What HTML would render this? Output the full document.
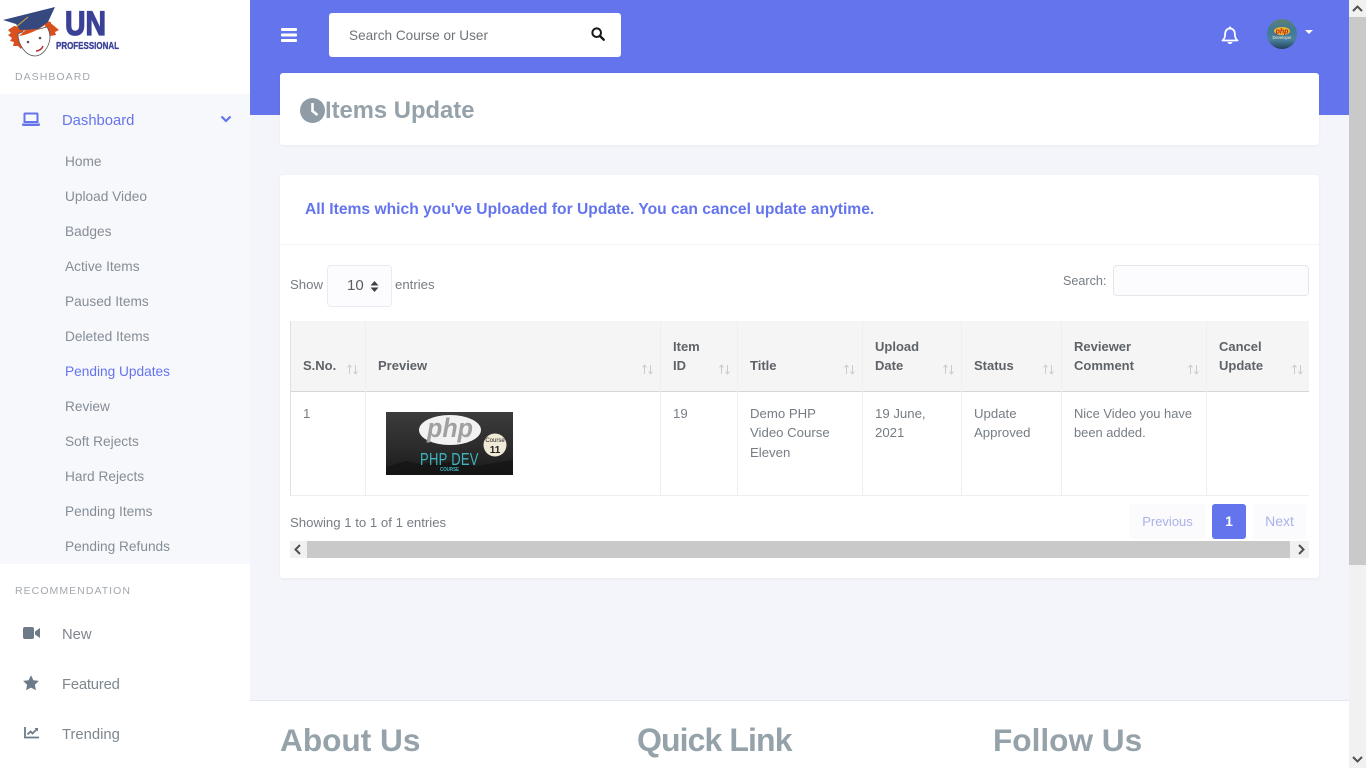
<!DOCTYPE html>
<html lang="en">
<head>
<meta charset="utf-8">
<title>Items Update</title>
<style>
*{box-sizing:border-box}
html,body{margin:0;padding:0;width:1366px;height:768px;overflow:hidden;background:#f4f5fa;font-family:"Liberation Sans",sans-serif;color:#6c757d;font-size:14px}
.a{position:absolute;white-space:nowrap}
.nav{font-size:13.7px;color:#858d96;left:65px;line-height:20px;margin-top:1px}
.hd{font-size:10.5px;letter-spacing:1.05px;color:#a3a8ae;left:15px;line-height:14px}
.main{font-size:14.8px;color:#7e868e;left:62px;line-height:20px}
.th{font-weight:bold;font-size:13px;color:#5e6368;line-height:19px}
.td{font-size:13.2px;color:#767d84;line-height:19.5px}
.v{position:absolute;width:1px;background:#eeeff1}
.s{position:absolute;top:364px;width:11px;height:11px}
.ft{font-weight:bold;font-size:32px;color:#95a2aa;line-height:40px;top:720px}
</style>
</head>
<body>
<div class="a" style="left:250px;top:0;width:1099px;height:115px;background:#6474ed"></div>
<div class="a" style="left:0;top:0;width:250px;height:768px;background:#fff"></div>
<div class="a" style="left:0;top:94px;width:250px;height:470px;background:#f7f8fb"></div>

<svg class="a" style="left:0;top:0" width="125" height="60" viewBox="0 0 125 60">
<path d="M14 26l-6 4 3 3-3 2 4 3-2 3 4 1-1 4 5 0 3 3 3-6-1-12 18-6 8-3 4 3 6 5-4 2 1 3-6 1-3 3-2-14-16 2z" fill="#d9501e"/>
<path d="M18 34c0 11 8 22 17 22 7 0 14-8 15-18 0-4-1-8-3-11l-20 5-5 0z" fill="#fff" stroke="#555" stroke-width=".8"/>
<path d="M19 36c8-1 17-5 26-11l5 5 1-8-14-2z" fill="#d9501e"/>
<path d="M3 20L55 7 48 22 38 29 20 30 16 24z" fill="#35497f"/>
<path d="M16 27l12-10" stroke="#d6b13a" stroke-width=".9" fill="none"/>
<circle cx="28" cy="42" r="1.300" fill="#555"/><circle cx="40" cy="38" r="1.300" fill="#555"/>
<path d="M36 51c3 0 6-2 7-5" stroke="#b33" stroke-width="1.600" fill="none"/>
<text x="65" y="35" font-family="Liberation Sans" font-weight="bold" font-size="34" fill="#3a4197" stroke="#3a4197" stroke-width="1.300" textLength="41" lengthAdjust="spacingAndGlyphs">UN</text>
<text x="56" y="49" font-family="Liberation Sans" font-weight="bold" font-size="10.500" fill="#3a4197" stroke="#3a4197" stroke-width=".35" textLength="63" lengthAdjust="spacingAndGlyphs">PROFESSIONAL</text>
</svg>

<div class="a hd" style="top:70px">DASHBOARD</div>
<svg class="a" style="left:22px;top:112px" width="18" height="15" viewBox="0 0 18 15"><path d="M3 1.500h12a.5.5 0 0 1 .5.5v8h-13V2a.5.5 0 0 1 .5-.5z" fill="none" stroke="#6474ed" stroke-width="2"/><path d="M0 11.500h18v1a1.500 1.500 0 0 1-1.500 1.500H1.500A1.500 1.500 0 0 1 0 12.500z" fill="#6474ed"/></svg>
<div class="a main" style="top:111px;color:#6474ed">Dashboard</div>
<svg class="a" style="left:220px;top:115px" width="12" height="9" viewBox="0 0 12 9"><path d="M1.500 1.500L6 6l4.500-4.500" fill="none" stroke="#6474ed" stroke-width="2.200"/></svg>
<div class="a nav" style="top:151px">Home</div>
<div class="a nav" style="top:186px">Upload Video</div>
<div class="a nav" style="top:221px">Badges</div>
<div class="a nav" style="top:256px">Active Items</div>
<div class="a nav" style="top:291px">Paused Items</div>
<div class="a nav" style="top:326px">Deleted Items</div>
<div class="a nav" style="top:361px;color:#6474ed">Pending Updates</div>
<div class="a nav" style="top:396px">Review</div>
<div class="a nav" style="top:431px">Soft Rejects</div>
<div class="a nav" style="top:466px">Hard Rejects</div>
<div class="a nav" style="top:501px">Pending Items</div>
<div class="a nav" style="top:536px">Pending Refunds</div>
<div class="a hd" style="top:584px">RECOMMENDATION</div>
<svg class="a" style="left:23px;top:627px" width="17" height="12" viewBox="0 0 17 12"><rect width="11" height="12" rx="2" fill="#6c7a89"/><path d="M12 4.500L17 1v10l-5-3.500z" fill="#6c7a89"/></svg>
<div class="a main" style="top:625px">New</div>
<svg class="a" style="left:23px;top:675px" width="16" height="16" viewBox="0 0 16 16"><path d="M8 .2l2.400 5 5.500.7-4 3.800 1 5.500L8 12.600l-4.900 2.600 1-5.500-4-3.800 5.500-.7z" fill="#6c7a89"/></svg>
<div class="a main" style="top:675px;letter-spacing:-.2px">Featured</div>
<svg class="a" style="left:24px;top:727px" width="15" height="12" viewBox="0 0 15 12"><path d="M1 0v10.500h14" fill="none" stroke="#6c7a89" stroke-width="1.800"/><path d="M3.500 7.500l3-3 2 2 4-4" fill="none" stroke="#6c7a89" stroke-width="1.800"/><path d="M10.500 1h3.500v3.500z" fill="#6c7a89"/></svg>
<div class="a main" style="top:725px">Trending</div>

<svg class="a" style="left:281px;top:28px" width="16" height="15" viewBox="0 0 16 15"><rect y="0" width="16" height="3" rx="1" fill="#fff"/><rect y="5.500" width="16" height="3" rx="1" fill="#fff"/><rect y="11" width="16" height="3" rx="1" fill="#fff"/></svg>
<div class="a" style="left:329px;top:13px;width:292px;height:44px;background:#fff;border-radius:3px"></div>
<div class="a" style="left:349px;top:26px;font-size:13.6px;line-height:20px;color:#6f7479">Search Course or User</div>
<svg class="a" style="left:591px;top:27px" width="14" height="14" viewBox="0 0 14 14"><circle cx="5.700" cy="5.700" r="4.300" fill="none" stroke="#16181a" stroke-width="2"/><path d="M9 9l3.700 3.700" stroke="#16181a" stroke-width="2.400" stroke-linecap="round"/></svg>
<svg class="a" style="left:1221px;top:26px" width="18" height="19" viewBox="0 0 18 19"><path d="M9 2.500c-3 0-4.800 2.300-4.800 5 0 4-1 5.500-2.700 7h15c-1.700-1.500-2.700-3-2.700-7 0-2.700-1.800-5-4.800-5z" fill="none" stroke="#fff" stroke-width="1.800" stroke-linejoin="round"/><circle cx="9" cy="1.800" r="1.300" fill="#fff"/><path d="M6.500 16h5a2.500 2 0 0 1-5 0z" fill="#fff"/></svg>
<svg class="a" style="left:1267px;top:19px" width="30" height="30" viewBox="0 0 30 30"><defs><clipPath id="c"><circle cx="15" cy="15" r="15"/></clipPath><linearGradient id="av" x1="0" y1="0" x2="0" y2="1"><stop offset="0" stop-color="#5f8272"/><stop offset=".35" stop-color="#3f7a96"/><stop offset=".7" stop-color="#4a7f9c"/><stop offset="1" stop-color="#22405e"/></linearGradient></defs><g clip-path="url(#c)"><rect width="30" height="30" fill="url(#av)"/><ellipse cx="15" cy="12" rx="8" ry="4" fill="#f0b429"/><text x="15" y="14.500" text-anchor="middle" font-family="Liberation Sans" font-weight="bold" font-style="italic" font-size="7" fill="#b3261e">php</text><text x="15" y="20" text-anchor="middle" font-family="Liberation Sans" font-size="4.200" fill="#f4f0d0">Developer</text></g></svg>
<div class="a" style="left:1305px;top:30px;width:0;height:0;border-left:4.500px solid transparent;border-right:4.500px solid transparent;border-top:4.500px solid #fff"></div>

<div class="a" style="left:280px;top:73px;width:1039px;height:72px;background:#fff;border-radius:3px;box-shadow:0 1px 3px rgba(60,70,100,.06)"></div>
<svg class="a" style="left:300px;top:98px" width="25" height="25" viewBox="0 0 25 25"><circle cx="12.500" cy="12.500" r="12.500" fill="#8f9ca5"/><path d="M12.500 5v8l5 4" fill="none" stroke="#fff" stroke-width="2.600"/></svg>
<div class="a" style="left:325px;top:96px;font-weight:bold;font-size:23.800px;line-height:30px;color:#95a2aa">Items Update</div>

<div class="a" style="left:280px;top:175px;width:1039px;height:403px;background:#fff;border-radius:3px;box-shadow:0 1px 3px rgba(60,70,100,.06)"></div>
<div class="a" style="left:280px;top:244px;width:1039px;height:1px;background:#f3f4f7"></div>
<div class="a" style="left:305px;top:200px;font-weight:bold;font-size:15.630px;line-height:20px;color:#6474ed">All Items which you've Uploaded for Update. You can cancel update anytime.</div>

<div class="a td" style="left:290px;top:275px">Show</div>
<div class="a" style="left:327px;top:265px;width:65px;height:42px;background:#fcfcfe;border:1px solid #e9ebf1;border-radius:4px"></div>
<div class="a" style="left:347px;top:276px;font-size:15px;line-height:20px;color:#595e63">10</div>
<svg class="a" style="left:370px;top:281px" width="9" height="11" viewBox="0 0 9 11"><path d="M4.500 0L8.500 4.500H.5zM4.500 11L.5 6.500h8z" fill="#3d4045"/></svg>
<div class="a td" style="left:395px;top:275px">entries</div>
<div class="a td" style="left:1063px;top:272px;font-size:12.600px">Search:</div>
<div class="a" style="left:1113px;top:265px;width:196px;height:31px;background:#fcfcfe;border:1px solid #e4e6ec;border-radius:4px"></div>

<div class="a" style="left:290px;top:321px;width:1019px;height:70px;background:#f5f5f6"></div>
<div class="a" style="left:290px;top:391px;width:1019px;height:1px;background:#d5d6d8"></div>
<div class="a" style="left:290px;top:495px;width:1019px;height:1px;background:#eeeff1"></div>
<div class="v" style="left:290px;top:321px;height:175px;background:#dfe0e3"></div>
<div class="v" style="left:365px;top:321px;height:175px"></div>
<div class="v" style="left:660px;top:321px;height:175px"></div>
<div class="v" style="left:737px;top:321px;height:175px"></div>
<div class="v" style="left:862px;top:321px;height:175px"></div>
<div class="v" style="left:961px;top:321px;height:175px"></div>
<div class="v" style="left:1061px;top:321px;height:175px"></div>
<div class="v" style="left:1206px;top:321px;height:175px"></div>

<div class="a th" style="left:303px;top:356px">S.No.</div>
<div class="a th" style="left:378px;top:356px">Preview</div>
<div class="a th" style="left:673px;top:337px">Item<br>ID</div>
<div class="a th" style="left:750px;top:356px">Title</div>
<div class="a th" style="left:875px;top:337px">Upload<br>Date</div>
<div class="a th" style="left:974px;top:356px">Status</div>
<div class="a th" style="left:1074px;top:337px">Reviewer<br>Comment</div>
<div class="a th" style="left:1219px;top:337px">Cancel<br>Update</div>
<svg class="s" style="left:347px" viewBox="0 0 11 11"><path d="M2.500 10V1M.5 3.500L2.500 1l2 2.500M8.500 1v9M6.500 7.500l2 2.500 2-2.500" fill="none" stroke="#c9cccf" stroke-width="1"/></svg>
<svg class="s" style="left:642px" viewBox="0 0 11 11"><path d="M2.500 10V1M.5 3.500L2.500 1l2 2.500M8.500 1v9M6.500 7.500l2 2.500 2-2.500" fill="none" stroke="#c9cccf" stroke-width="1"/></svg>
<svg class="s" style="left:719px" viewBox="0 0 11 11"><path d="M2.500 10V1M.5 3.500L2.500 1l2 2.500M8.500 1v9M6.500 7.500l2 2.500 2-2.500" fill="none" stroke="#c9cccf" stroke-width="1"/></svg>
<svg class="s" style="left:844px" viewBox="0 0 11 11"><path d="M2.500 10V1M.5 3.500L2.500 1l2 2.500M8.500 1v9M6.500 7.500l2 2.500 2-2.500" fill="none" stroke="#c9cccf" stroke-width="1"/></svg>
<svg class="s" style="left:943px" viewBox="0 0 11 11"><path d="M2.500 10V1M.5 3.500L2.500 1l2 2.500M8.500 1v9M6.500 7.500l2 2.500 2-2.500" fill="none" stroke="#c9cccf" stroke-width="1"/></svg>
<svg class="s" style="left:1043px" viewBox="0 0 11 11"><path d="M2.500 10V1M.5 3.500L2.500 1l2 2.500M8.500 1v9M6.500 7.500l2 2.500 2-2.500" fill="none" stroke="#c9cccf" stroke-width="1"/></svg>
<svg class="s" style="left:1188px" viewBox="0 0 11 11"><path d="M2.500 10V1M.5 3.500L2.500 1l2 2.500M8.500 1v9M6.500 7.500l2 2.500 2-2.500" fill="none" stroke="#c9cccf" stroke-width="1"/></svg>
<svg class="s" style="left:1292px" viewBox="0 0 11 11"><path d="M2.500 10V1M.5 3.500L2.500 1l2 2.500M8.500 1v9M6.500 7.500l2 2.500 2-2.500" fill="none" stroke="#c9cccf" stroke-width="1"/></svg>

<div class="a td" style="left:303px;top:404px">1</div>
<svg class="a" style="left:386px;top:412px" width="127" height="63" viewBox="0 0 127 63">
<defs><linearGradient id="g" x1="0" y1="0" x2="0" y2="1"><stop offset="0" stop-color="#3c3c3c"/><stop offset=".6" stop-color="#2a2a2a"/><stop offset="1" stop-color="#1a1a1a"/></linearGradient></defs>
<rect width="127" height="63" fill="url(#g)"/>
<path d="M0 55l20-6 15 3 30-2 25 4 37-6v15H0z" fill="#111" opacity=".6"/>
<ellipse cx="64" cy="18" rx="31" ry="15" fill="#f2f2f2"/>
<text x="64" y="25" text-anchor="middle" font-family="Liberation Sans" font-weight="bold" font-style="italic" font-size="27" fill="#a0a0a0" textLength="46" lengthAdjust="spacingAndGlyphs">php</text>
<circle cx="109" cy="33" r="11.500" fill="#efe9d6"/>
<text x="109" y="30" text-anchor="middle" font-family="Liberation Sans" font-size="6" fill="#222">Course</text>
<text x="109" y="41" text-anchor="middle" font-family="Liberation Sans" font-weight="bold" font-size="10" fill="#222">11</text>
<text transform="translate(34 53) scale(1 1.350)" font-family="Liberation Sans" font-size="13" letter-spacing="1.500" fill="#3fb6bd" textLength="60">PHP DEV</text>
<text x="54" y="59" font-family="Liberation Sans" font-weight="bold" font-size="5" fill="#3fb6bd" textLength="19" lengthAdjust="spacingAndGlyphs">COURSE</text>
</svg>
<div class="a td" style="left:673px;top:404px">19</div>
<div class="a td" style="left:750px;top:403.700px">Demo PHP<br>Video Course<br>Eleven</div>
<div class="a td" style="left:875px;top:403.700px">19 June,<br>2021</div>
<div class="a td" style="left:974px;top:403.700px">Update<br>Approved</div>
<div class="a td" style="left:1074px;top:403.700px;font-size:12.900px">Nice Video you have<br>been added.</div>

<div class="a td" style="left:290px;top:513px">Showing 1 to 1 of 1 entries</div>
<div class="a" style="left:1129px;top:504px;width:77px;height:35px;background:#fbfbfe;border-radius:3px;text-align:center;font-size:13px;line-height:35px;color:#a9b1ea">Previous</div>
<div class="a" style="left:1212px;top:504px;width:34px;height:35px;background:#6474ed;border-radius:3px;text-align:center;font-size:14px;font-weight:bold;line-height:35px;color:#fff">1</div>
<div class="a" style="left:1253px;top:504px;width:53px;height:35px;background:#fbfbfe;border-radius:3px;text-align:center;font-size:14px;line-height:35px;color:#a9b1ea">Next</div>

<div class="a" style="left:290px;top:541px;width:1019px;height:17px;background:#f1f1f1"></div>
<div class="a" style="left:307px;top:541px;width:983px;height:17px;background:#c9c9c9"></div>
<svg class="a" style="left:293px;top:544px" width="9" height="11" viewBox="0 0 9 11"><path d="M7 1L2.500 5.500 7 10" fill="none" stroke="#505050" stroke-width="2"/></svg>
<svg class="a" style="left:1297px;top:544px" width="9" height="11" viewBox="0 0 9 11"><path d="M2 1l4.500 4.500L2 10" fill="none" stroke="#505050" stroke-width="2"/></svg>

<div class="a" style="left:250px;top:700px;width:1099px;height:68px;background:#fff;border-top:1px solid #e6e8ef"></div>
<div class="a ft" style="left:280px;font-size:31.600px">About Us</div>
<div class="a ft" style="left:637px;letter-spacing:-.9px">Quick Link</div>
<div class="a ft" style="left:993px;font-size:31.600px">Follow Us</div>

<div class="a" style="left:1349px;top:0;width:17px;height:768px;background:#f1f1f1"></div>
<div class="a" style="left:1349px;top:17px;width:17px;height:548px;background:#c9c9c9"></div>
<svg class="a" style="left:1352px;top:4px" width="11" height="9" viewBox="0 0 11 9"><path d="M1 7l4.500-4.500L10 7" fill="none" stroke="#505050" stroke-width="2"/></svg>
<svg class="a" style="left:1352px;top:755px" width="11" height="9" viewBox="0 0 11 9"><path d="M1 2l4.500 4.500L10 2" fill="none" stroke="#505050" stroke-width="2"/></svg>
</body>
</html>
